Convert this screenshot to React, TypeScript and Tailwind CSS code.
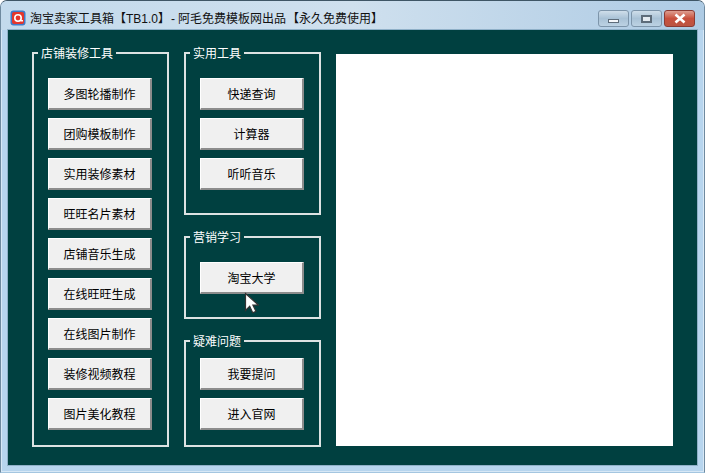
const font = { fontFamily: '"Liberation Sans", "Noto Sans CJK SC", sans-serif' };

function ToolButton({ label }: { label: string }) {
  return (
    <button className="h-[32px] w-[104px] shrink-0 border-t border-l border-t-white border-l-white border-r-2 border-b-2 border-r-[#8c8c8c] border-b-[#8c8c8c] bg-[#f0f0f0] pt-[3px] text-[12px] leading-none text-black">
      {label}
    </button>
  );
}

function Group({ title, items, className }: { title: string; items: string[]; className: string }) {
  return (
    <div className={`relative flex w-[137px] flex-col items-start gap-[8px] border-2 border-[#dce2e2] pl-[14px] ${className}`}>
      <span className="absolute top-[-8px] left-[4px] bg-[#004040] px-[3px] text-[12px] leading-[16px] text-white">
        {title}
      </span>
      {items.map((item) => (
        <ToolButton key={item} label={item} />
      ))}
    </div>
  );
}

export default function App() {
  return (
    <div
      style={font}
      className="relative flex h-[473px] w-[705px] flex-col overflow-hidden rounded-t-[7px] border border-[#6f8a9f] border-t-[#3f5666] border-b-[#a4c6e0] bg-[#b7d5ee] shadow-[inset_0_0_0_1px_rgba(255,255,255,0.45)]"
    >
      <div className="flex h-[29px] shrink-0 items-start bg-gradient-to-r from-[#c3daec] via-[#cfe0ee] to-[#aecbe4] pt-[9px] pr-[9px] pl-[9px]">
        <svg width="16" height="16" viewBox="0 0 16 16" className="mr-[4px] shrink-0">
          <rect x="0.5" y="0.5" width="15" height="15" rx="3" fill="#3f7cc9" />
          <rect x="2" y="2" width="12" height="12" rx="2" fill="#e5362c" />
          <circle cx="8" cy="8" r="3.2" fill="none" stroke="#fff" strokeWidth="1.6" />
          <path d="M10.5 10.8h2.5" stroke="#fff" strokeWidth="1.4" />
        </svg>
        <span className="mt-[3px] text-[12px] leading-none whitespace-nowrap text-[#111]">
          淘宝卖家工具箱【TB1.0】<span className="ml-[1px]">-</span>
          <span className="ml-[3px]">阿毛免费模板网出品</span>
          <span className="ml-[1px]">【永久免费使用】</span>
        </span>
        <div className="ml-auto flex h-[17px] items-stretch gap-[2px]">
          <div className="flex w-[31px] items-center justify-center rounded-[3px] border border-[#7d95aa] bg-gradient-to-b from-[#cfdeea] via-[#a9c2d6] to-[#bcd2e3]">
            <div className="mt-[4px] h-[4px] w-[11px] border border-[#5d6c7a] bg-[#f4f7fa]" />
          </div>
          <div className="flex w-[31px] items-center justify-center rounded-[3px] border border-[#7d95aa] bg-gradient-to-b from-[#cfdeea] via-[#a9c2d6] to-[#bcd2e3]">
            <div className="h-[8px] w-[11px] border-2 border-[#5d6c7a] bg-[#e4ebf1]" />
          </div>
          <div className="flex w-[31px] items-center justify-center rounded-[3px] border border-[#8c3b33] bg-gradient-to-b from-[#dd9d90] via-[#c8503d] to-[#bb5442]">
            <svg width="14" height="11" viewBox="0 0 14 11">
              <path d="M2.5 1.5 11.5 9.5M11.5 1.5 2.5 9.5" stroke="#fff" strokeWidth="2.6" />
            </svg>
          </div>
        </div>
      </div>
      <div className="mx-[7px] flex h-[435px] gap-[15px] bg-[#004040] pt-[22px] pl-[24px] outline outline-[#8fb0c8]">
        <Group
          title="店铺装修工具"
          className="h-[395px] pt-[24px]"
          items={[
            "多图轮播制作",
            "团购模板制作",
            "实用装修素材",
            "旺旺名片素材",
            "店铺音乐生成",
            "在线旺旺生成",
            "在线图片制作",
            "装修视频教程",
            "图片美化教程",
          ]}
        />
        <div className="flex flex-col gap-[21px]">
          <Group title="实用工具" className="h-[163px] pt-[24px]" items={["快递查询", "计算器", "听听音乐"]} />
          <Group title="营销学习" className="h-[83px] pt-[24px]" items={["淘宝大学"]} />
          <Group title="疑难问题" className="h-[107px] pt-[16px]" items={["我要提问", "进入官网"]} />
        </div>
        <div className="mt-[2px] h-[392px] w-[337px] bg-white" />
      </div>
      <svg width="15" height="22" viewBox="0 0 15 22" className="absolute top-[291px] left-[243px]">
        <path d="M1.5 1.5v17l4.2-4.2 3 6.4 3.2-1.4-3-6.2h5.6z" fill="#fff" stroke="#333" strokeWidth="1.2" />
      </svg>
    </div>
  );
}
